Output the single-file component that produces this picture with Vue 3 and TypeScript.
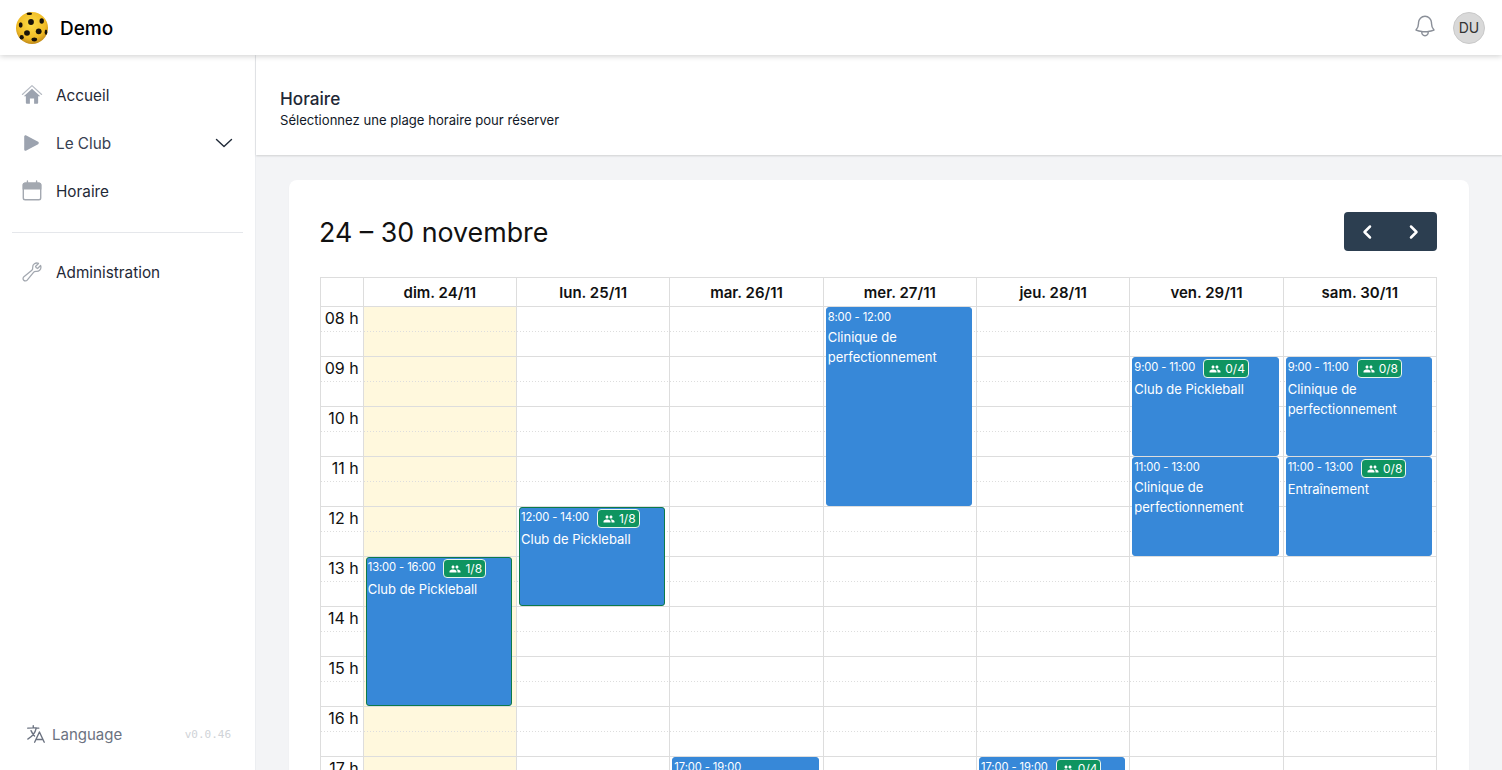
<script setup lang="ts">
interface CalEvent {
  day: number;
  start: number;
  hours: number;
  time: string;
  title: string;
  badge?: string;
  booked?: boolean;
}

const hourHeight = 50;
const firstHour = 8;

const days = ["dim. 24/11", "lun. 25/11", "mar. 26/11", "mer. 27/11", "jeu. 28/11", "ven. 29/11", "sam. 30/11"];
const hours = ["08 h", "09 h", "10 h", "11 h", "12 h", "13 h", "14 h", "15 h", "16 h", "17 h"];

const events: CalEvent[] = [
  { day: 0, start: 13, hours: 3, time: "13:00 - 16:00", title: "Club de Pickleball", badge: "1/8", booked: true },
  { day: 1, start: 12, hours: 2, time: "12:00 - 14:00", title: "Club de Pickleball", badge: "1/8", booked: true },
  { day: 2, start: 17, hours: 2, time: "17:00 - 19:00", title: "Clinique de perfectionnement" },
  { day: 3, start: 8, hours: 4, time: "8:00 - 12:00", title: "Clinique de perfectionnement" },
  { day: 4, start: 17, hours: 2, time: "17:00 - 19:00", title: "Club de Pickleball", badge: "0/4" },
  { day: 5, start: 9, hours: 2, time: "9:00 - 11:00", title: "Club de Pickleball", badge: "0/4" },
  { day: 5, start: 11, hours: 2, time: "11:00 - 13:00", title: "Clinique de perfectionnement" },
  { day: 6, start: 9, hours: 2, time: "9:00 - 11:00", title: "Clinique de perfectionnement", badge: "0/8" },
  { day: 6, start: 11, hours: 2, time: "11:00 - 13:00", title: "Entraînement", badge: "0/8" },
];

const eventsFor = (day: number) => events.filter((e) => e.day === day);
const eventStyle = (e: CalEvent) => ({
  top: `${(e.start - firstHour) * hourHeight}px`,
  height: `${e.hours * hourHeight - 1}px`,
});
</script>

<template>
  <div class="app">
    <header class="topbar">
      <div class="brand">
        <svg class="logo" viewBox="0 0 32 32">
          <defs>
            <radialGradient id="ball" cx="48%" cy="38%" r="68%">
              <stop offset="0%" stop-color="#fddc45" />
              <stop offset="65%" stop-color="#f0bb26" />
              <stop offset="100%" stop-color="#b27a14" />
            </radialGradient>
          </defs>
          <circle cx="16" cy="16" r="16" fill="url(#ball)" />
          <g fill="#17120a">
            <ellipse cx="15" cy="10" rx="2.900" ry="2.900" />
            <ellipse cx="13.300" cy="1.800" rx="2.800" ry="1.300" />
            <ellipse cx="25.700" cy="9" rx="2.200" ry="2.700" />
            <ellipse cx="4.700" cy="13" rx="1.900" ry="2.700" />
            <ellipse cx="11" cy="21" rx="2.900" ry="2.700" />
            <ellipse cx="22.700" cy="19.300" rx="2.900" ry="2.900" />
            <ellipse cx="30" cy="20.300" rx="1.300" ry="2.700" />
            <ellipse cx="18.300" cy="27.500" rx="2.800" ry="1.900" />
            <ellipse cx="5.700" cy="25.300" rx="2.100" ry="2.200" />
          </g>
        </svg>
        <span class="brand-name">Demo</span>
      </div>
      <div class="top-actions">
        <svg class="bell" viewBox="0 0 24 24" fill="none" stroke="#8a8f98" stroke-width="1.300" stroke-linecap="round" stroke-linejoin="round">
          <path d="M14.857 17.082a23.848 23.848 0 0 0 5.454-1.310A8.967 8.967 0 0 1 18 9.750V9A6 6 0 0 0 6 9v.75a8.967 8.967 0 0 1-2.312 6.022c1.733.64 3.560 1.085 5.455 1.310m5.714 0a24.255 24.255 0 0 1-5.714 0m5.714 0a3 3 0 1 1-5.714 0" />
        </svg>
        <div class="avatar">DU</div>
      </div>
    </header>

    <div class="main">
      <aside class="sidebar">
        <nav class="nav">
          <a class="nav-item">
            <svg class="nav-icon" viewBox="0 0 24 24" fill="#9ca3af">
              <path d="M12 5.200 21 13.400h-2.300v7.100a1 1 0 0 1-1 1h-3.400v-5.600H9.700v5.600H6.300a1 1 0 0 1-1-1v-7.100H3z" />
              <path d="M1.500 11.400 12 1.800l10.500 9.600" fill="none" stroke="#b6bbc3" stroke-width="1.300" stroke-linecap="round" stroke-linejoin="round" />
            </svg>
            <span>Accueil</span>
          </a>
          <a class="nav-item">
            <svg class="nav-icon" viewBox="0 0 24 24" fill="#9ca3af">
              <path d="M3.500 5c0-1.200 1.200-1.900 2.300-1.300l12.900 7c1 .6 1 2 0 2.600l-12.900 7c-1.100.6-2.300-.1-2.300-1.300z" />
            </svg>
            <span class="muted">Le Club</span>
            <svg class="chevron" viewBox="0 0 18 10" fill="none" stroke="#1f2937" stroke-width="1.400" stroke-linecap="round" stroke-linejoin="round">
              <path d="m1.500 1.500 7.500 7 7.500-7" />
            </svg>
          </a>
          <a class="nav-item">
            <svg class="nav-icon" viewBox="0 0 24 24" fill="none" stroke="#a3a8b0" stroke-width="1.500">
              <rect x="2.500" y="3.500" width="19" height="18" rx="2" />
              <path d="M2.500 5.500a2 2 0 0 1 2-2h15a2 2 0 0 1 2 2v4h-19z" fill="#a3a8b0" />
              <path d="M7 1v3M17 1v3" stroke-linecap="round" />
            </svg>
            <span>Horaire</span>
          </a>
        </nav>
        <div class="nav-sep"></div>
        <nav class="nav-admin">
          <a class="nav-item">
            <svg class="nav-icon" viewBox="0 0 24 24" fill="none" stroke="#a3a8b0" stroke-width="1.400" stroke-linecap="round" stroke-linejoin="round">
              <path d="M21.750 6.750a4.500 4.500 0 0 1-4.884 4.484c-1.076-.091-2.264.071-2.950.904l-7.152 8.684a2.548 2.548 0 1 1-3.586-3.586l8.684-7.152c.833-.686.995-1.874.904-2.950a4.500 4.500 0 0 1 6.336-4.486l-3.276 3.276a3.004 3.004 0 0 0 2.250 2.250l3.276-3.276c.258.578.398 1.220.398 1.898Z" />
            </svg>
            <span>Administration</span>
          </a>
        </nav>
        <div class="side-foot">
          <div class="lang">
            <svg class="lang-icon" viewBox="0 0 24 24" fill="none" stroke="#6b7280" stroke-width="1.500" stroke-linecap="round" stroke-linejoin="round">
              <path d="m10.500 21 5.250-11.250L21 21m-9-3h7.500M3 5.621a48.474 48.474 0 0 1 6-.371m0 0c1.120 0 2.233.038 3.334.114M9 5.250V3m3.334 2.364C11.176 10.658 7.690 15.080 3 17.502m9.334-12.138c.896.061 1.785.147 2.666.257m-4.589 8.495a18.023 18.023 0 0 1-3.827-5.802" />
            </svg>
            <span>Language</span>
          </div>
          <span class="version">v0.0.46</span>
        </div>
      </aside>

      <main class="content">
        <section class="page-head">
          <h1>Horaire</h1>
          <p>Sélectionnez une plage horaire pour réserver</p>
        </section>

        <section class="page-body">
          <div class="card">
            <div class="cal-toolbar">
              <h2>24 – 30 novembre</h2>
              <div class="cal-nav">
                <button aria-label="Précédent">
                  <svg viewBox="0 0 12 18" fill="none" stroke="#fff" stroke-width="2.500" stroke-linecap="round" stroke-linejoin="round"><path d="M9 3.500 3.500 9 9 14.500" /></svg>
                </button>
                <button aria-label="Suivant">
                  <svg viewBox="0 0 12 18" fill="none" stroke="#fff" stroke-width="2.500" stroke-linecap="round" stroke-linejoin="round"><path d="M3 3.500 8.500 9 3 14.500" /></svg>
                </button>
              </div>
            </div>

            <div class="calendar">
              <div class="cal-row cal-head">
                <div class="head-cell"></div>
                <div v-for="d in days" :key="d" class="head-cell">{{ d }}</div>
              </div>
              <div class="cal-row cal-body">
                <div class="time-col">
                  <div v-for="h in hours" :key="h" class="slot">
                    <span class="time-label">{{ h }}</span>
                  </div>
                </div>
                <div v-for="(d, i) in days" :key="d" class="day-col" :class="{ today: i === 0 }">
                  <div v-for="h in hours" :key="h" class="slot"></div>
                  <div
                    v-for="e in eventsFor(i)"
                    :key="e.time"
                    class="event"
                    :class="{ booked: e.booked }"
                    :style="eventStyle(e)"
                  >
                    <div class="event-top">
                      <span class="event-time">{{ e.time }}</span>
                      <span v-if="e.badge" class="badge">
                        <svg viewBox="0 0 24 24" fill="#fff"><path d="M16 11c1.660 0 2.990-1.340 2.990-3S17.660 5 16 5c-1.660 0-3 1.340-3 3s1.340 3 3 3zm-8 0c1.660 0 2.990-1.340 2.990-3S9.660 5 8 5C6.340 5 5 6.340 5 8s1.340 3 3 3zm0 2c-2.330 0-7 1.170-7 3.500V19h14v-2.500c0-2.330-4.670-3.500-7-3.500zm8 0c-.29 0-.62.02-.97.05 1.160.84 1.970 1.970 1.970 3.450V19h6v-2.500c0-2.330-4.670-3.500-7-3.500z" /></svg>
                        {{ e.badge }}
                      </span>
                    </div>
                    <div class="event-title">{{ e.title }}</div>
                  </div>
                </div>
              </div>
            </div>
          </div>
        </section>
      </main>
    </div>
  </div>
</template>

<style>
html,
body {
  margin: 0;
  height: 100%;
  overflow: hidden;
}
</style>

<style scoped>
.app {
  height: 770px;
  display: flex;
  flex-direction: column;
  font-family: Inter, "Noto Sans", sans-serif;
  color: #111827;
  background: #f3f4f6;
  overflow: hidden;
}

.topbar {
  height: 55px;
  flex: none;
  display: flex;
  align-items: center;
  justify-content: space-between;
  padding: 0 17px 0 16px;
  background: #fff;
  box-shadow: 0 1px 6px rgba(0, 0, 0, 0.2);
  position: relative;
  z-index: 2;
}

.brand {
  display: flex;
  align-items: center;
  gap: 12px;
}

.logo {
  width: 32px;
  height: 32px;
}

.brand-name {
  margin-top: 2px;
  font-size: 19px;
  font-weight: 500;
  color: #000;
}

.top-actions {
  display: flex;
  align-items: center;
  gap: 15px;
}

.bell {
  width: 26px;
  height: 26px;
  margin-top: -4px;
}

.avatar {
  width: 32px;
  height: 32px;
  box-sizing: border-box;
  border-radius: 50%;
  background: #d9d9d9;
  border: 1px solid #c9c9c9;
  display: flex;
  align-items: center;
  justify-content: center;
  font-size: 14px;
  color: #333;
}

.main {
  flex: 1;
  display: flex;
  min-height: 0;
}

.sidebar {
  width: 256px;
  flex: none;
  box-sizing: border-box;
  display: flex;
  flex-direction: column;
  background: #fff;
  border-right: 1px solid #eceef1;
}

.nav {
  padding-top: 16px;
}

.nav-item {
  height: 48px;
  display: flex;
  align-items: center;
  padding: 0 22px 0 21px;
  font-size: 15.3px;
  color: #1f2937;
}

.nav-icon {
  width: 22px;
  height: 22px;
  margin-right: 13px;
  flex: none;
}

.muted {
  color: #374151;
}

.chevron {
  width: 18px;
  height: 10px;
  margin-left: auto;
}

.nav-sep {
  height: 1px;
  background: #e5e7eb;
  margin: 17px 12px 15px;
}

.side-foot {
  margin-top: auto;
  height: 72px;
  display: flex;
  align-items: center;
  justify-content: space-between;
  padding: 0 24px 0 25px;
}

.lang {
  display: flex;
  align-items: center;
  gap: 5px;
  font-size: 15px;
  color: #6b7280;
}

.lang-icon {
  width: 22px;
  height: 22px;
}

.version {
  font-family: "DejaVu Sans Mono", "Liberation Mono", monospace;
  font-size: 11px;
  color: #d0d3d7;
}

.content {
  flex: 1;
  min-width: 0;
  display: flex;
  flex-direction: column;
}

.page-head {
  height: 100px;
  flex: none;
  box-sizing: border-box;
  padding: 34px 24px 0;
  background: #fff;
  box-shadow: 0 1px 2px rgba(0, 0, 0, 0.15);
}

.page-head h1 {
  margin: 0;
  font-size: 17.2px;
  line-height: 20px;
  font-weight: 500;
  color: #1f2937;
}

.page-head p {
  margin: 2px 0 0;
  font-size: 13.1px;
  line-height: 18px;
  color: #111827;
}

.page-body {
  padding: 25px 33px 0;
}

.card {
  background: #fff;
  border-radius: 8px;
  padding: 32px 32px 0 31px;
  box-shadow: 0 1px 2px rgba(0, 0, 0, 0.04);
}

.cal-toolbar {
  height: 39px;
  display: flex;
  align-items: center;
  justify-content: space-between;
  margin-bottom: 26px;
}

.cal-toolbar h2 {
  margin: 0 0 0 -1px;
  font-size: 26.8px;
  font-weight: 400;
  color: #111;
}

.cal-nav {
  display: flex;
  height: 39px;
  border-radius: 4px;
  background: #2c3e50;
  overflow: hidden;
}

.cal-nav button {
  width: 46.5px;
  border: 0;
  padding: 0;
  background: transparent;
  display: flex;
  align-items: center;
  justify-content: center;
}

.cal-nav svg {
  width: 12px;
  height: 18px;
}

.calendar {
  border: 1px solid #ddd;
  border-bottom: 0;
}

.cal-row {
  display: grid;
  grid-template-columns: 41.7px repeat(7, 1fr);
}

.cal-head {
  height: 28px;
  border-bottom: 1px solid #ddd;
}

.head-cell {
  display: flex;
  align-items: center;
  justify-content: center;
  font-size: 15px;
  font-weight: 600;
  color: #111;
  border-left: 1px solid #ddd;
}

.head-cell:first-child {
  border-left: 0;
}

.day-col {
  position: relative;
  border-left: 1px solid #ddd;
}

.today {
  background: #fff8dd;
}

.slot {
  height: 50px;
  box-sizing: border-box;
  border-bottom: 1px solid #ddd;
  background-image: linear-gradient(to right, #ddd 50%, transparent 50%);
  background-size: 3px 1px;
  background-repeat: repeat-x;
  background-position: 0 24px;
}

.time-col .slot {
  display: flex;
  justify-content: flex-end;
  padding: 1px 4px 0 0;
}

.time-label {
  font-size: 16px;
  line-height: 20px;
  color: #111;
}

.event {
  position: absolute;
  left: 2px;
  right: 4px;
  box-sizing: border-box;
  padding: 0 1px;
  background: #3788d8;
  border: 1px solid #3788d8;
  border-radius: 3px;
  color: #fff;
  overflow: hidden;
}

.event.booked {
  border-color: #0d7a4a;
}

.event-top {
  display: flex;
  align-items: flex-start;
  gap: 8px;
  white-space: nowrap;
}

.event-time {
  font-size: 11.2px;
  line-height: 18px;
  letter-spacing: -0.1px;
}

.badge {
  display: inline-flex;
  align-items: center;
  gap: 4px;
  height: 19px;
  box-sizing: border-box;
  padding: 0 3px 0 5px;
  margin-top: 1px;
  border: 1px solid #e8f5ee;
  border-radius: 4px;
  background: #0f9460;
  font-size: 12px;
}

.badge svg {
  width: 12px;
  height: 12px;
}

.event-title {
  margin-top: 1px;
  font-size: 13px;
  line-height: 20px;
}
</style>
